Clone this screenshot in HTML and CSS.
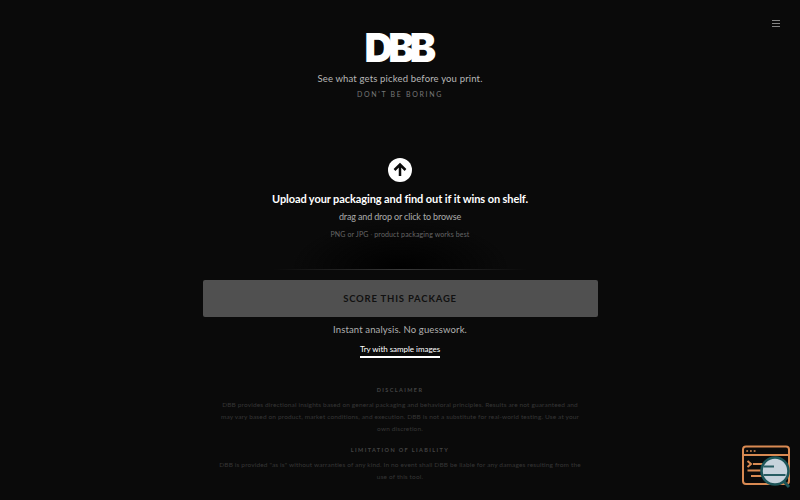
FILE: index.html
```html
<!DOCTYPE html>
<html lang="en">
<head>
    <meta charset="UTF-8">
    <meta name="viewport" content="width=device-width, initial-scale=1.0">
    <title>DBB</title>
    <link rel="stylesheet" href="styles.css">
</head>
<body>
    <button class="menu-button" aria-label="Menu">
        <span></span>
        <span></span>
        <span></span>
    </button>

    <main class="page">
        <header class="header">
            <h1 class="logo">DBB</h1>
            <p class="tagline">See what gets picked before you print.</p>
            <p class="motto">DON'T BE BORING</p>
        </header>

        <section class="upload">
            <svg class="upload-icon" viewBox="0 0 24 24">
                <circle cx="12" cy="12" r="12" fill="#fff"/>
                <path d="M12 18V7M6.5 12L12 6.5l5.5 5.5" fill="none" stroke="#0a0a0a" stroke-width="2.5"/>
            </svg>
            <h2 class="upload-title">Upload your packaging and find out if it wins on shelf.</h2>
            <p class="upload-text">drag and drop or click to browse</p>
            <p class="upload-hint">PNG or JPG <span>·</span> product packaging works best</p>
        </section>

        <button class="score-button">SCORE THIS PACKAGE</button>
        <p class="note">Instant analysis. No guesswork.</p>
        <a class="sample-link" href="#">Try with sample images</a>

        <footer class="legal">
            <h3>DISCLAIMER</h3>
            <p>
                DBB provides directional insights based on general packaging and behavioral principles. Results are not guaranteed and<br>
                may vary based on product, market conditions, and execution. DBB is not a substitute for real-world testing. Use at your<br>
                own discretion.
            </p>
            <h3>LIMITATION OF LIABILITY</h3>
            <p>
                DBB is provided "as is" without warranties of any kind. In no event shall DBB be liable for any damages resulting from the<br>
                use of this tool.
            </p>
        </footer>
    </main>

    <svg class="badge" viewBox="0 0 50 44" fill="none">
        <rect x="2" y="1.5" width="46" height="37.5" rx="3" stroke="#d98a52" stroke-width="2"/>
        <path d="M2 10h46" stroke="#d98a52" stroke-width="1.8"/>
        <path d="M5.3 6h1.8M9 6h1.8M12.7 6h1.8" stroke="#d98a52" stroke-width="1.5"/>
        <path d="M6.5 16l3.5 3-3.5 3M12 19h14.5M6.5 25.5h16M10 31h13.5" stroke="#d98a52" stroke-width="2"/>
        <path d="M41.5 35l6.5 7" stroke="#1d5558" stroke-width="3"/>
        <circle cx="34" cy="26" r="13.5" fill="#c7d3dc" stroke="#1d5558" stroke-width="2.6"/>
        <path d="M22.5 21.5H33M22.5 30h22" stroke="#285d63" stroke-width="2"/>
    </svg>
</body>
</html>
```

FILE: styles.css
```css
* {
    box-sizing: border-box;
}

body {
    margin: 0;
    height: 100vh;
    overflow: hidden;
    background-color: #0a0a0a;
    color: #fff;
    font-family: Lato, "Open Sans", sans-serif;
    text-align: center;
}

h1, h2, h3, p {
    margin: 0;
}

.menu-button {
    position: absolute;
    top: 20px;
    right: 20px;
    width: 8px;
    padding: 0;
    border: none;
    background: none;
    display: flex;
    flex-direction: column;
    gap: 2px;
}

.menu-button span {
    height: 1px;
    background-color: #858585;
}

.page {
    width: 395px;
    margin: 0 auto;
    display: flex;
    flex-direction: column;
    align-items: center;
}

.header {
    height: 148px;
    padding-top: 27px;
}

.logo {
    font-family: Inter, sans-serif;
    font-size: 39.5px;
    line-height: 42px;
    font-weight: 900;
    letter-spacing: -4.8px;
    padding-right: 4px;
}

.tagline {
    margin-top: 3px;
    font-size: 9.5px;
    line-height: 14px;
    letter-spacing: 0.16px;
    color: #b8b8b8;
}

.motto {
    margin-top: 2px;
    font-size: 7px;
    line-height: 12px;
    letter-spacing: 1.7px;
    color: #777;
}

.upload {
    width: 100%;
    height: 122px;
    padding-top: 10px;
    display: flex;
    flex-direction: column;
    align-items: center;
    background: radial-gradient(ellipse 110px 50px at 50% 100%, #000 0%, #040404 35%, transparent 100%);
    border-bottom: 1px solid;
    border-image: linear-gradient(90deg, transparent 18%, #383838 50%, transparent 82%) 1;
}

.upload-icon {
    width: 24px;
    height: 24px;
    flex-shrink: 0;
}

.upload-title {
    margin-top: 9px;
    font-size: 11px;
    line-height: 16px;
    letter-spacing: -0.09px;
    white-space: nowrap;
}

.upload-text {
    margin-top: 3px;
    font-size: 9px;
    line-height: 13px;
    letter-spacing: -0.15px;
    color: #aaa;
}

.upload-hint {
    margin-top: 6px;
    font-size: 7px;
    line-height: 10px;
    letter-spacing: 0.13px;
    color: #666;
}

.upload-hint span {
    color: #333;
}

.score-button {
    width: 100%;
    height: 37px;
    margin-top: 10px;
    padding: 0;
    border: none;
    border-radius: 2px;
    background-color: #505050;
    color: #111;
    font-family: inherit;
    font-size: 9.5px;
    font-weight: bold;
    letter-spacing: 0.8px;
}

.note {
    margin-top: 6px;
    font-size: 9.5px;
    line-height: 14px;
    letter-spacing: 0.13px;
    color: #b0b0b0;
}

.sample-link {
    margin-top: 6px;
    font-size: 8px;
    line-height: 12px;
    letter-spacing: -0.04px;
    padding-bottom: 1px;
    border-bottom: 2px solid #fff;
    color: #fff;
    text-decoration: none;
}

.legal {
    margin-top: 27px;
    color: #363636;
}

.legal h3 {
    font-size: 5.5px;
    line-height: 10px;
    letter-spacing: 1.4px;
    color: #444;
}

.legal p {
    margin: 4px 0 10px;
    font-size: 6.5px;
    line-height: 12px;
    letter-spacing: 0.15px;
    white-space: nowrap;
}

.badge {
    position: absolute;
    left: 741px;
    top: 445px;
    width: 50px;
    height: 44px;
}
```
